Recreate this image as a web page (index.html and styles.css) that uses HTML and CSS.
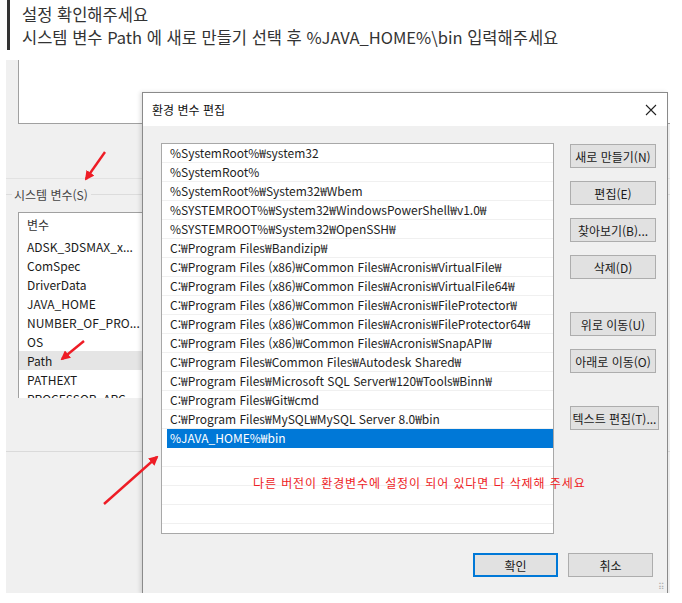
FILE: index.html
```html
<!DOCTYPE html>
<html lang="ko">
<head>
    <meta charset="UTF-8">
    <title>환경 변수 설정</title>
    <link rel="stylesheet" href="styles.css">
</head>
<body>
    <div class="note">
        <p>설정 확인해주세요</p>
        <p>시스템 변수 Path 에 새로 만들기 선택 후 %JAVA_HOME%\bin 입력해주세요</p>
    </div>

    <div class="shot">
        <!-- background window (환경 변수) -->
        <div class="top-box"></div>
        <div class="sep"></div>
        <div class="group-label"><span>시스템 변수(S)</span></div>
        <div class="var-list">
            <div class="var-head"><span>변수</span></div>
            <div class="var-row">ADSK_3DSMAX_x...</div>
            <div class="var-row">ComSpec</div>
            <div class="var-row">DriverData</div>
            <div class="var-row">JAVA_HOME</div>
            <div class="var-row">NUMBER_OF_PRO...</div>
            <div class="var-row">OS</div>
            <div class="var-row hover">Path</div>
            <div class="var-row">PATHEXT</div>
            <div class="var-row">PROCESSOR_ARC...</div>
        </div>
        <div class="bottom-line"></div>

        <!-- edit dialog -->
        <div class="dialog">
            <div class="dialog-title">
                <span>환경 변수 편집</span>
                <svg class="close" width="12" height="12" viewBox="0 0 12 12">
                    <path d="M1 1 L11 11 M11 1 L1 11" stroke="#222" stroke-width="1.1" fill="none"/>
                </svg>
            </div>
            <div class="dialog-body">
                <div class="main-row">
                    <div class="path-list">
                        <div class="path-row">%SystemRoot%₩system32</div>
                        <div class="path-row">%SystemRoot%</div>
                        <div class="path-row">%SystemRoot%₩System32₩Wbem</div>
                        <div class="path-row">%SYSTEMROOT%₩System32₩WindowsPowerShell₩v1.0₩</div>
                        <div class="path-row">%SYSTEMROOT%₩System32₩OpenSSH₩</div>
                        <div class="path-row">C:₩Program Files₩Bandizip₩</div>
                        <div class="path-row">C:₩Program Files (x86)₩Common Files₩Acronis₩VirtualFile₩</div>
                        <div class="path-row">C:₩Program Files (x86)₩Common Files₩Acronis₩VirtualFile64₩</div>
                        <div class="path-row">C:₩Program Files (x86)₩Common Files₩Acronis₩FileProtector₩</div>
                        <div class="path-row">C:₩Program Files (x86)₩Common Files₩Acronis₩FileProtector64₩</div>
                        <div class="path-row">C:₩Program Files (x86)₩Common Files₩Acronis₩SnapAPI₩</div>
                        <div class="path-row">C:₩Program Files₩Common Files₩Autodesk Shared₩</div>
                        <div class="path-row">C:₩Program Files₩Microsoft SQL Server₩120₩Tools₩Binn₩</div>
                        <div class="path-row">C:₩Program Files₩Git₩cmd</div>
                        <div class="path-row">C:₩Program Files₩MySQL₩MySQL Server 8.0₩bin</div>
                        <div class="path-row selected">%JAVA_HOME%₩bin</div>
                        <div class="path-row"></div>
                        <div class="path-row"></div>
                        <div class="path-row"></div>
                        <div class="path-row"></div>
                    </div>
                    <div class="side-buttons">
                        <button class="btn">새로 만들기(N)</button>
                        <button class="btn">편집(E)</button>
                        <button class="btn">찾아보기(B)...</button>
                        <button class="btn">삭제(D)</button>
                        <button class="btn gap">위로 이동(U)</button>
                        <button class="btn">아래로 이동(O)</button>
                        <button class="btn gap wide">텍스트 편집(T)...</button>
                    </div>
                </div>
                <div class="footer">
                    <button class="btn ok">확인</button>
                    <button class="btn">취소</button>
                </div>
            </div>
            <div class="grip">⠿</div>
        </div>

        <div class="red-note">다른 버전이 환경변수에 설정이 되어 있다면 다 삭제해 주세요</div>

        <!-- red arrows drawn on the screenshot -->
        <svg class="arrows" width="664" height="533" viewBox="0 0 664 533">
            <defs>
                <marker id="head" viewBox="0 0 10 10" refX="8" refY="5" markerWidth="4" markerHeight="4" orient="auto">
                    <path d="M0 0 L10 5 L0 10 Z" fill="#ee1c25"/>
                </marker>
            </defs>
            <line x1="99" y1="92" x2="80" y2="119" stroke="#ee1c25" stroke-width="2.4" marker-end="url(#head)"/>
            <line x1="78" y1="281" x2="56" y2="299" stroke="#ee1c25" stroke-width="2.4" marker-end="url(#head)"/>
            <line x1="98" y1="444" x2="151" y2="397" stroke="#ee1c25" stroke-width="2.4" marker-end="url(#head)"/>
        </svg>
    </div>
</body>
</html>
```

FILE: styles.css
```css
body {
    margin: 0;
    background: #ffffff;
    font-family: "Noto Sans CJK KR", "Noto Sans", sans-serif;
    width: 682px;
    height: 603px;
    overflow: hidden;
}
.note {
    margin-left: 7px;
    border-left: 3px solid #333333;
    padding: 3px 0 4px 12px;
    height: 43px;
    color: #333333;
    font-size: 16.5px;
}
.note p {
    margin: 0;
    line-height: 23px;
}

/* screenshot area */
.shot {
    position: relative;
    margin: 10px 0 0 6px;
    width: 664px;
    height: 533px;
    background: #f0f0f0;
    overflow: hidden;
    font-size: 12px;
    color: #1a1a1a;
}
.top-box {
    margin-left: 12px;
    height: 63px;
    background: #ffffff;
    border-left: 1px solid #a0a0a0;
    border-bottom: 1px solid #a0a0a0;
}
.sep {
    margin-top: 54px;
    height: 1px;
    background: #e2e2e2;
}
.group-label {
    display: flex;
    align-items: center;
    margin-top: 7px;
    height: 16px;
}
.group-label::before {
    content: "";
    width: 6px;
    height: 1px;
    background: #dcdcdc;
}
.group-label::after {
    content: "";
    flex: 1;
    height: 1px;
    background: #dcdcdc;
}
.group-label span {
    padding: 0 3px 0 2px;
    color: #444;
}
.var-list {
    margin: 10px 0 0 12px;
    width: 140px;
    height: 185px;
    background: #ffffff;
    border-left: 1px solid #a0a0a0;
    border-top: 1px solid #a0a0a0;
    overflow: hidden;
}
.var-head {
    height: 24px;
    display: flex;
    align-items: center;
    padding-left: 8px;
}
.var-head span {
    flex: 1;
    line-height: 24px;
    border-right: 1px solid #e5e5e5;
    margin-right: 5px;
    color: #333;
}
.var-row {
    height: 19px;
    line-height: 19px;
    padding-left: 8px;
    white-space: nowrap;
}
.var-row.hover {
    background: #e5e5e5;
}
.bottom-line {
    margin-top: 53px;
    height: 1px;
    background: #dadada;
}

/* dialog */
.dialog {
    position: absolute;
    left: 136px;
    top: 32px;
    width: 524px;
    height: 500px;
    background: #f0f0f0;
    border: 1px solid #8a8a8a;
    box-shadow: -2px 0 4px rgba(0, 0, 0, 0.12);
}
.dialog-title {
    height: 33px;
    background: #ffffff;
    display: flex;
    align-items: center;
    justify-content: space-between;
    padding: 0 10px 0 9px;
}
.dialog-title span {
    color: #111;
}
.dialog-body {
    padding: 17px 14px 0 18px;
}
.main-row {
    display: flex;
    gap: 16px;
}
.path-list {
    flex: none;
    width: 391px;
    height: 389px;
    background: #ffffff;
    border: 1px solid #a8a8a8;
    overflow: hidden;
}
.path-row {
    height: 18px;
    line-height: 18px;
    border-bottom: 1px solid #f0f0f0;
    padding-left: 8px;
    white-space: nowrap;
    color: #1e1e1e;
}
.path-row.selected {
    background: #0078d7;
    color: #ffffff;
    margin-left: 5px;
    padding-left: 3px;
    border-bottom-color: #0078d7;
}
.side-buttons {
    display: flex;
    flex-direction: column;
    align-items: flex-start;
    gap: 13px;
    padding-top: 1px;
}
.btn {
    width: 86px;
    height: 24px;
    padding: 0;
    background: #e1e1e1;
    border: 1px solid #adadad;
    font-family: "Noto Sans CJK KR", "Noto Sans", sans-serif;
    font-size: 12px;
    color: #1a1a1a;
    white-space: nowrap;
}
.btn.gap {
    margin-top: 20px;
}
.btn.wide {
    width: 89px;
}
.footer {
    display: flex;
    justify-content: flex-end;
    gap: 10px;
    margin-top: 19px;
}
.footer .btn {
    width: 85px;
}
.btn.ok {
    border: 2px solid #0078d7;
}
.grip {
    position: absolute;
    right: 2px;
    bottom: 0;
    font-size: 9px;
    color: #b0b0b0;
}
.red-note {
    position: absolute;
    left: 247px;
    top: 414px;
    color: #ee1c25;
    font-size: 12px;
    letter-spacing: 0.9px;
}
.arrows {
    position: absolute;
    left: 0;
    top: 0;
}
```
